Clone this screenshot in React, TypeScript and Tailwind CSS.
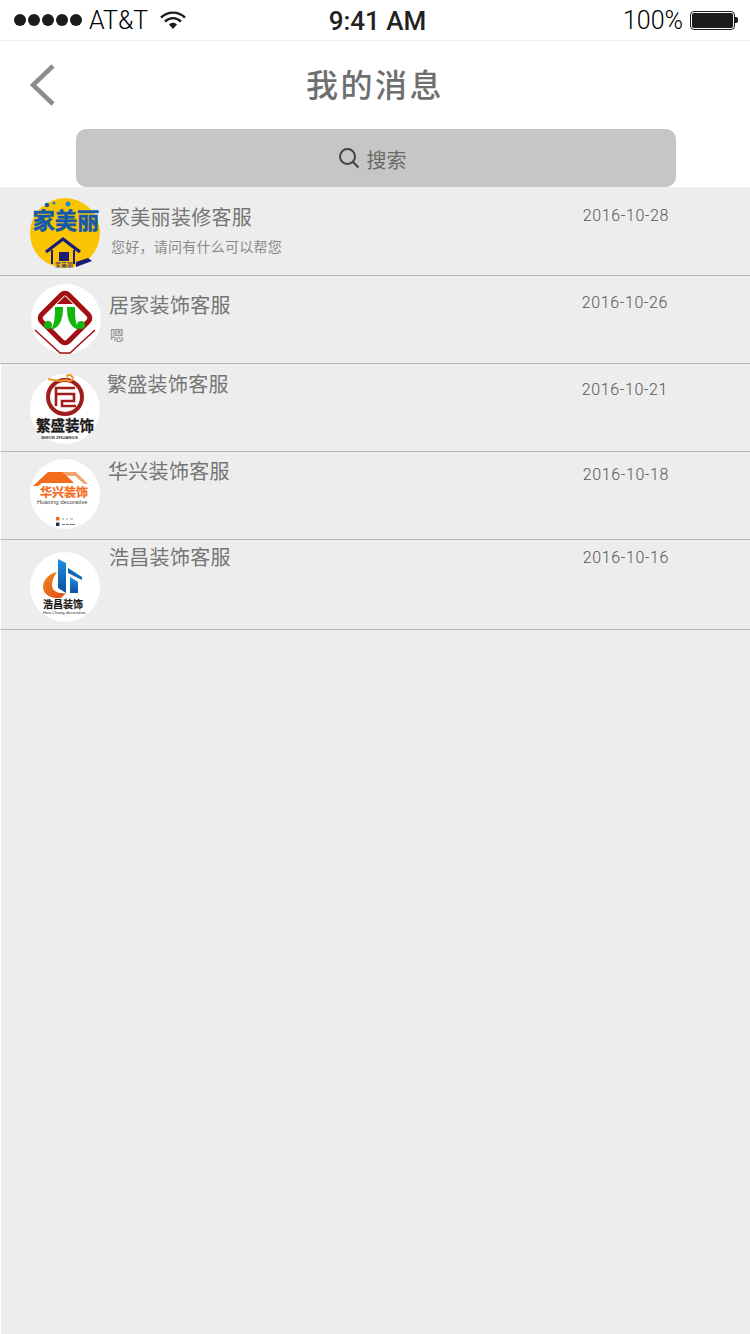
import type { ReactNode } from "react";

const cjk = "font-['Noto_Sans_CJK_SC','Noto_Sans',sans-serif]";

function JiaMeiLi() {
  return (
    <svg viewBox="0 0 70 70" className="w-full h-full">
      <circle cx="35" cy="35" r="35" fill="#fbc402" />
      <text x="2.5" y="31" fontSize="22.3" fontWeight="700" fill="#1259a8" stroke="#1259a8" strokeWidth="0.5" fontFamily="Noto Sans CJK SC">
        家美丽
      </text>
      <circle cx="17" cy="7" r="2.2" fill="#1259a8" />
      <circle cx="24" cy="5" r="1.6" fill="#1b86d6" />
      <circle cx="38" cy="6" r="2.5" fill="#1b86d6" />
      <path d="M16 54 L33 41 L50 54" fill="none" stroke="#1c1a78" strokeWidth="3.2" />
      <path d="M22 52 V66 M44 52 V66" stroke="#1c1a78" strokeWidth="2" />
      <rect x="29" y="54" width="10" height="9" fill="#1c1a78" />
      <text x="25" y="69" fontSize="6" fill="#1c1a78" fontFamily="Noto Sans CJK SC">
        家美丽
      </text>
      <path d="M46 64 L58 60 L62 63 L46 69 Z" fill="#1c1a78" />
    </svg>
  );
}

function JuJia() {
  return (
    <svg viewBox="0 0 70 70" className="w-full h-full">
      <circle cx="35" cy="35" r="35" fill="#fff" />
      <rect x="15" y="15" width="38" height="38" rx="5" transform="rotate(45 34 34)" fill="none" stroke="#a20f12" strokeWidth="5" />
      <path d="M4 46 L29 69 H39 L64 46" fill="none" stroke="#a20f12" strokeWidth="1.5" />
      <path d="M34 12 L26 20 H42 Z" fill="#a20f12" />
      <path d="M24 23 H32 C32 34 30 43 20 46 C24 39 24 31 24 23 Z" fill="#12b60f" />
      <path d="M36 23 H44 C44 31 44 39 48 46 C38 43 36 34 36 23 Z" fill="#12b60f" />
      <circle cx="17" cy="41" r="4" fill="#12b60f" />
      <circle cx="50" cy="41" r="4" fill="#12b60f" />
    </svg>
  );
}

function FanSheng() {
  return (
    <svg viewBox="0 0 70 70" className="w-full h-full">
      <circle cx="35" cy="35" r="35" fill="#fff" />
      <circle cx="35" cy="23" r="17" fill="none" stroke="#a11d1b" strokeWidth="4" />
      <path d="M26 32 V14 H45 M26 20 H44 V27 H32 V32 H46" fill="none" stroke="#a11d1b" strokeWidth="2.6" />
      <path d="M18 5 C26 7 32 7 36 6 C43 9 45 3 40 1 C38 0 36 2 38 3" fill="none" stroke="#ec9a2c" strokeWidth="2" />
      <text x="6" y="57" fontSize="14.5" fontWeight="700" fill="#1a1a1a" stroke="#1a1a1a" strokeWidth="0.3" fontFamily="Noto Sans CJK SC">
        繁盛装饰
      </text>
      <text x="11" y="64.5" fontSize="4.4" fontWeight="700" fill="#333" fontFamily="Liberation Sans">
        SHION ZHUANGS
      </text>
    </svg>
  );
}

function HuaXing() {
  return (
    <svg viewBox="0 0 70 70" className="w-full h-full">
      <circle cx="35" cy="35" r="35" fill="#fff" />
      <path d="M3 27 L18 13 H33 L44 24 H12 L8 27 Z" fill="#f26c1d" />
      <path d="M33 13 H46 L58 25 H54 L45 17 H37 Z" fill="#f4a36f" />
      <text x="10" y="37.5" fontSize="12" fontWeight="700" fill="#f26c1d" stroke="#f26c1d" strokeWidth="0.25" fontFamily="Noto Sans CJK SC">
        华兴装饰
      </text>
      <text x="7" y="44.5" fontSize="5.9" fill="#444" fontFamily="Liberation Sans">
        Huaxing decorative
      </text>
      <rect x="26" y="58" width="3.5" height="3.5" fill="#f26c1d" />
      <rect x="26" y="63.5" width="3.5" height="3.5" fill="#143b63" />
      <path d="M32 60 H34 M36 60 H38 M40 60 H43" stroke="#999" strokeWidth="1" />
      <path d="M32 65.5 H35 M36 65.5 H39 M40 65.5 H45" stroke="#777" strokeWidth="1" />
    </svg>
  );
}

function HaoChang() {
  return (
    <svg viewBox="0 0 70 70" className="w-full h-full">
      <defs>
        <linearGradient id="hc-blue" x1="0" y1="0" x2="0" y2="1">
          <stop offset="0" stopColor="#1f8fe0" />
          <stop offset="1" stopColor="#0d4f9e" />
        </linearGradient>
        <linearGradient id="hc-orange" x1="0" y1="0" x2="1" y2="1">
          <stop offset="0" stopColor="#f08a1d" />
          <stop offset="1" stopColor="#e0481a" />
        </linearGradient>
      </defs>
      <circle cx="35" cy="35" r="35" fill="#fff" />
      <path d="M28 7 L36 11 V41 L28 36 Z" fill="url(#hc-blue)" />
      <path d="M38 16 L52 25 V28 L38 21 Z" fill="#1267b4" />
      <path d="M40 25 L48 30 V41 H40 Z" fill="url(#hc-blue)" />
      <path d="M27 20 C17 22 13 30 13 35 C13 43 22 47 31 46 L36 41 C28 42 22 39 22 33 C22 28 24 24 27 20 Z" fill="url(#hc-orange)" />
      <text x="13" y="56" fontSize="10" fontWeight="700" fill="#1a1a1a" stroke="#1a1a1a" strokeWidth="0.2" fontFamily="Noto Sans CJK SC">
        浩昌装饰
      </text>
      <text x="13" y="62" fontSize="4.3" fill="#333" fontFamily="Liberation Sans">
        Hao Chang decorative
      </text>
    </svg>
  );
}

interface Message {
  name: string;
  preview?: string;
  date: string;
  logo: ReactNode;
  rowClass: string;
  avatarClass: string;
  bodyClass: string;
  dateClass: string;
}

const messages: Message[] = [
  {
    name: "家美丽装修客服",
    preview: "您好，请问有什么可以帮您",
    date: "2016-10-28",
    logo: <JiaMeiLi />,
    rowClass: "h-[89px]",
    avatarClass: "ml-[30px] mt-[11px]",
    bodyClass: "ml-[10px] pt-[16px]",
    dateClass: "mr-[81px] pt-[19px]",
  },
  {
    name: "居家装饰客服",
    preview: "嗯",
    date: "2016-10-26",
    logo: <JuJia />,
    rowClass: "h-[88px]",
    avatarClass: "ml-[31px] mt-[8px]",
    bodyClass: "ml-[8px] pt-[15px]",
    dateClass: "mr-[82px] pt-[17px]",
  },
  {
    name: "繁盛装饰客服",
    date: "2016-10-21",
    logo: <FanSheng />,
    rowClass: "h-[88px] border-l border-l-white",
    avatarClass: "ml-[29px] mt-[10px]",
    bodyClass: "ml-[7px] pt-[6px]",
    dateClass: "mr-[82px] pt-[16px]",
  },
  {
    name: "华兴装饰客服",
    date: "2016-10-18",
    logo: <HuaXing />,
    rowClass: "h-[88px] border-l border-l-white",
    avatarClass: "ml-[29px] mt-[7px]",
    bodyClass: "ml-[8px] pt-[5px]",
    dateClass: "mr-[81px] pt-[13px]",
  },
  {
    name: "浩昌装饰客服",
    date: "2016-10-16",
    logo: <HaoChang />,
    rowClass: "h-[90px] border-l border-l-white",
    avatarClass: "ml-[29px] mt-[12px]",
    bodyClass: "ml-[9px] pt-[3px]",
    dateClass: "mr-[81px] pt-[8px]",
  },
];

function StatusBar() {
  return (
    <div className="h-[41px] flex items-center border-b border-[#eeeeee] font-['Roboto',sans-serif] text-black">
      <div className="flex-1 flex items-center pl-[14px]">
        <div className="flex gap-[2px]">
          {[0, 1, 2, 3, 4].map((i) => (
            <span key={i} className="w-[12px] h-[12px] rounded-full bg-[#1c1c1c]" />
          ))}
        </div>
        <span className="ml-[7px] text-[25px] leading-[30px] font-light pt-[2px]">AT&amp;T</span>
        <svg viewBox="0 0 26 18" className="ml-[12px] w-[26px] h-[18px]">
          <path d="M1 6.5 C8 0 18 0 25 6.5" fill="none" stroke="#1c1c1c" strokeWidth="2.4" />
          <path d="M5 10.5 C10 6 16 6 21 10.5" fill="none" stroke="#1c1c1c" strokeWidth="2.4" />
          <path d="M9 13.5 C11.5 11 14.5 11 17 13.5 L13 18 Z" fill="#1c1c1c" />
        </svg>
      </div>
      <span className="text-[26px] leading-[30px] font-medium text-[#222222] pt-[2px] ml-[3px]">9:41 AM</span>
      <div className="flex-1 flex items-center justify-end pr-[12px]">
        <span className="text-[25px] leading-[30px] font-light pt-[2px] mr-px">100%</span>
        <div className="ml-[6px] w-[45px] h-[19px] rounded-[4px] border border-[#1c1c1c] p-[1px]">
          <div className="w-full h-full rounded-[2px] bg-[#1c1c1c]" />
        </div>
        <div className="w-[3px] h-[6px] rounded-r-[2px] bg-[#1c1c1c]" />
      </div>
    </div>
  );
}

function Header() {
  return (
    <div className="h-[88px] flex items-center">
      <div className="w-[100px] pl-[29px]">
        <svg width="28" height="44" viewBox="0 0 28 44">
          <path d="M24 3 L4 22 L24 41" fill="none" stroke="#8c8c8c" strokeWidth="4.5" />
        </svg>
      </div>
      <h1 className={`flex-1 text-center pb-[4px] text-[32px] leading-[44px] tracking-[2.5px] font-medium text-[#6f6f6f] ${cjk}`}>
        我的消息
      </h1>
      <div className="w-[100px]" />
    </div>
  );
}

function SearchBar() {
  return (
    <div className="ml-[76px] mr-[74px] h-[58px] rounded-[10px] bg-[#c6c6c6] flex items-center justify-center pr-[8px]">
      <svg width="22" height="22" viewBox="0 0 22 22" className="mr-[7px]">
        <circle cx="9.5" cy="9.5" r="7.5" fill="none" stroke="#444444" strokeWidth="2" />
        <path d="M15 15 L20.5 20.5" stroke="#444444" strokeWidth="2.2" />
      </svg>
      <span className={`pt-[4px] text-[20px] leading-[28px] text-[#6a6a6a] ${cjk}`}>搜索</span>
    </div>
  );
}

function MessageRow({ message }: { message: Message }) {
  return (
    <div className={`flex items-start border-b border-b-[#b6b6b6] ${message.rowClass}`}>
      <div className={`w-[70px] h-[70px] shrink-0 ${message.avatarClass}`}>{message.logo}</div>
      <div className={`flex-1 ${message.bodyClass}`}>
        <div className={`text-[20px] leading-[28px] tracking-[0.3px] text-[#757575] ${cjk}`}>{message.name}</div>
        {message.preview && (
          <div className={`mt-[5px] ml-px text-[14px] leading-[20px] tracking-[0.25px] text-[#8a8a8a] ${cjk}`}>
            {message.preview}
          </div>
        )}
      </div>
      <div className={`font-['Roboto',sans-serif] font-light text-[16px] leading-[20px] tracking-[0.6px] text-[#555555] ${message.dateClass}`}>
        {message.date}
      </div>
    </div>
  );
}

export default function App() {
  return (
    <div className="w-[750px] min-h-[1334px] flex flex-col bg-white">
      <StatusBar />
      <Header />
      <SearchBar />
      <div className="flex-1 flex flex-col bg-[#ededed]">
        {messages.map((message) => (
          <MessageRow key={message.name} message={message} />
        ))}
        <div className="flex-1 border-l border-l-white" />
      </div>
    </div>
  );
}
